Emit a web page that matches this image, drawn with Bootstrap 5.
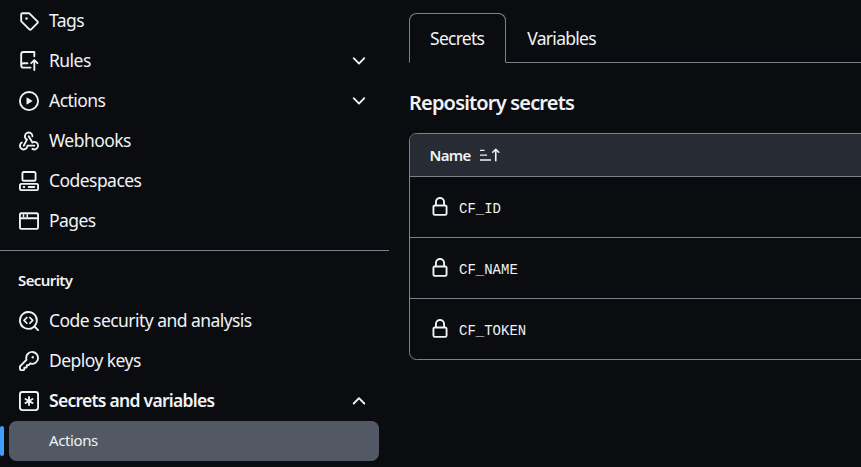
<!DOCTYPE html>
<html>
<head>
  <meta charset="utf-8">
  <meta name="viewport" content="width=device-width">
  <title>Secrets</title>
  <link href="https://cdn.jsdelivr.net/npm/bootstrap@5.3.3/dist/css/bootstrap.min.css" rel="stylesheet" type="text/css" />
  <style>
    html, body { height: 467px; overflow: hidden; }
    body { background: #0a0c10; color: #f0f3f6; font-family: "Noto Sans", "Open Sans", sans-serif; font-size: 17.5px; letter-spacing: -.55px; }
    svg { fill: currentColor; flex: none; }
    .page-wrap { width: 861px; overflow: hidden; }
    .side-pane { width: 389px; flex: none; padding-top: 1px; }
    .side-item { height: 40px; margin: 0 10px 0 9px; padding: 0 10px; gap: 10px; color: #f0f3f6; text-decoration: none; border-radius: 7.5px; position: relative; }
    .side-item > span { margin-top: -2px; }
    .side-item .chev { margin-left: auto; }
    .side-item.is-open { font-weight: 600; letter-spacing: -.73px; }
    .side-item.is-current { background: #525964; font-size: 15px; padding-left: 40px; letter-spacing: -.4px; }
    .side-item.is-current::before { content: ""; position: absolute; left: -9px; top: 5px; width: 4px; height: 30px; background: #409eff; border-radius: 5px; }
    .side-rule { margin: 9px 0 0; border-top: 1px solid #7a828e; opacity: 1; }
    .side-head { font-size: 15px; font-weight: 600; padding: 19px 0 0 18px; height: 50px; line-height: 20px; letter-spacing: -.6px; }
    .main-pane { width: 600px; flex: none; padding: 13px 0 0 20px; }
    .nav-tabs { border-bottom: 1px solid #7a828e; --bs-nav-tabs-border-color: #7a828e; height: 50px; }
    .nav-tabs .nav-link { color: #f0f3f6; height: 50px; padding: 0 21px 0 20px; display: flex; align-items: center; border-radius: 7.5px 7.5px 0 0; border-width: 1px; letter-spacing: -.72px; }
    .nav-tabs .nav-link.active { background: #0a0c10; color: #f0f3f6; border-color: #7a828e #7a828e #0a0c10; }
    .nav-tabs .nav-link:not(.active) { border-color: transparent; }
    .repo-title { font-size: 20px; font-weight: 600; margin: 26px 0 17px; line-height: 27px; letter-spacing: -.82px; }
    .secret-box { border: 1px solid #7a828e; border-radius: 7.5px; overflow: hidden; }
    .secret-head { height: 43px; background: #272b33; border-bottom: 1px solid #7a828e; padding: 0 20px 0 19.5px; gap: 9px; font-size: 15px; font-weight: 600; letter-spacing: -.7px; }
    .secret-row { height: 61px; padding: 0 20px; gap: 9px; border-bottom: 1px solid #7a828e; }
    .secret-row:last-child { border-bottom: 0; height: 60px; }
    .secret-name { font-family: "Liberation Mono", monospace; font-size: 14px; letter-spacing: 0; margin-top: 4px; }
  </style>
</head>
<body>
  <div class="page-wrap d-flex">
    <nav class="side-pane">
      <a class="side-item d-flex align-items-center" href="#">
        <svg width="20" height="20" viewBox="0 0 16 16"><path d="M1 7.775V2.75C1 1.784 1.784 1 2.75 1h5.025c.464 0 .91.184 1.238.513l6.25 6.25a1.75 1.75 0 0 1 0 2.474l-5.026 5.026a1.75 1.75 0 0 1-2.474 0l-6.25-6.25A1.752 1.752 0 0 1 1 7.775Zm1.5 0c0 .066.026.13.073.177l6.25 6.25a.25.25 0 0 0 .354 0l5.025-5.025a.25.25 0 0 0 0-.354l-6.25-6.25a.25.25 0 0 0-.177-.073H2.75a.25.25 0 0 0-.25.25ZM6 5a1 1 0 1 1 0 2 1 1 0 0 1 0-2Z"/></svg>
        <span>Tags</span>
      </a>
      <a class="side-item d-flex align-items-center" href="#">
        <svg width="20" height="20" viewBox="0 0 16 16"><path d="M1 2.5A2.5 2.5 0 0 1 3.5 0h8.75a.75.75 0 0 1 .75.75v3.5a.75.75 0 0 1-1.5 0V1.5h-8a1 1 0 0 0-1 1v6.708A2.493 2.493 0 0 1 3.5 9h3.25a.75.75 0 0 1 0 1.5H3.5a1 1 0 0 0 0 2h5.75a.75.75 0 0 1 0 1.5H3.5A2.5 2.5 0 0 1 1 11.5Zm13.23 7.79h-.001l-1.224-1.224v6.184a.75.75 0 0 1-1.5 0V9.066L10.28 10.29a.75.75 0 0 1-1.06-1.061l2.505-2.504a.75.75 0 0 1 1.06 0L15.29 9.23a.751.751 0 0 1-.018 1.042.751.751 0 0 1-1.042.018Z"/></svg>
        <span>Rules</span>
        <svg class="chev" width="20" height="20" viewBox="0 0 16 16"><path d="M12.78 5.22a.749.749 0 0 1 0 1.06l-4.25 4.25a.749.749 0 0 1-1.06 0L3.22 6.28a.749.749 0 1 1 1.06-1.06L8 8.939l3.72-3.719a.749.749 0 0 1 1.06 0Z"/></svg>
      </a>
      <a class="side-item d-flex align-items-center" href="#">
        <svg width="20" height="20" viewBox="0 0 16 16"><path d="M8 0a8 8 0 1 1 0 16A8 8 0 0 1 8 0ZM1.5 8a6.5 6.5 0 1 0 13 0 6.5 6.5 0 0 0-13 0Zm4.879-2.773 4.264 2.559a.25.25 0 0 1 0 .428l-4.264 2.559A.25.25 0 0 1 6 10.559V5.442a.25.25 0 0 1 .379-.215Z"/></svg>
        <span>Actions</span>
        <svg class="chev" width="20" height="20" viewBox="0 0 16 16"><path d="M12.78 5.22a.749.749 0 0 1 0 1.06l-4.25 4.25a.749.749 0 0 1-1.06 0L3.22 6.28a.749.749 0 1 1 1.06-1.06L8 8.939l3.72-3.719a.749.749 0 0 1 1.06 0Z"/></svg>
      </a>
      <a class="side-item d-flex align-items-center" href="#">
        <svg width="20" height="20" viewBox="0 0 16 16"><path d="M5.5 4.25a2.25 2.25 0 0 1 4.5 0 .75.75 0 0 0 1.5 0 3.75 3.75 0 1 0-6.14 2.889l-2.272 4.258a.75.75 0 0 0 1.324.706L7 7.25a.75.75 0 0 0-.309-1.015A2.25 2.25 0 0 1 5.5 4.25Z"/><path d="M7.364 3.607a.75.75 0 0 1 1.03.257l2.608 4.349a3.75 3.75 0 1 1-.628 6.785.75.75 0 0 1 .752-1.299 2.25 2.25 0 1 0-.033-3.88.75.75 0 0 1-1.03-.256L7.107 4.636a.75.75 0 0 1 .257-1.03Z"/><path d="M2.9 8.776A.75.75 0 0 1 2.625 9.8 2.25 2.25 0 1 0 6 11.75a.75.75 0 0 1 .75-.751h5.5a.75.75 0 0 1 0 1.5H7.425a3.751 3.751 0 1 1-5.55-3.998.75.75 0 0 1 1.024.274Z"/></svg>
        <span>Webhooks</span>
      </a>
      <a class="side-item d-flex align-items-center" href="#">
        <svg width="20" height="20" viewBox="0 0 16 16"><path d="M0 11.25c0-.966.784-1.75 1.75-1.75h12.5c.966 0 1.75.784 1.75 1.75v3A1.75 1.75 0 0 1 14.25 16H1.75A1.75 1.75 0 0 1 0 14.25Zm2-9.5C2 .784 2.784 0 3.75 0h8.5C13.216 0 14 .784 14 1.75v5a1.75 1.75 0 0 1-1.75 1.75h-8.5A1.75 1.75 0 0 1 2 6.75Zm1.75-.25a.25.25 0 0 0-.25.25v5c0 .138.112.25.25.25h8.5a.25.25 0 0 0 .25-.25v-5a.25.25 0 0 0-.25-.25Zm-2 9.5a.25.25 0 0 0-.25.25v3c0 .138.112.25.25.25h12.5a.25.25 0 0 0 .25-.25v-3a.25.25 0 0 0-.25-.25Z"/><path d="M7 12.75a.75.75 0 0 1 .75-.75h4.5a.75.75 0 0 1 0 1.5h-4.5a.75.75 0 0 1-.75-.75Zm-4 0a.75.75 0 0 1 .75-.75h.5a.75.75 0 0 1 0 1.5h-.5a.75.75 0 0 1-.75-.75Z"/></svg>
        <span>Codespaces</span>
      </a>
      <a class="side-item d-flex align-items-center" href="#">
        <svg width="20" height="20" viewBox="0 0 16 16"><path d="M0 2.75C0 1.784.784 1 1.75 1h12.5c.966 0 1.75.784 1.75 1.75v10.5A1.75 1.75 0 0 1 14.25 15H1.75A1.75 1.75 0 0 1 0 13.25ZM14.5 6.5h-13v6.75c0 .138.112.25.25.25h12.5a.25.25 0 0 0 .25-.25Zm0-3.75a.25.25 0 0 0-.25-.25H1.75a.25.25 0 0 0-.25.25V5h13Z"/><rect x="3" y="2.5" width="1.2" height="2.5"/><rect x="6" y="2.5" width="1.2" height="2.5"/></svg>
        <span>Pages</span>
      </a>

      <hr class="side-rule">
      <div class="side-head">Security</div>

      <a class="side-item d-flex align-items-center" href="#">
        <svg width="20" height="20" viewBox="0 0 16 16"><path d="M0 7.5a7.5 7.5 0 1 1 13.307 4.747l2.473 2.473a.75.75 0 1 1-1.06 1.06l-2.473-2.473A7.5 7.5 0 0 1 0 7.5Zm7.5-6a6 6 0 1 0 0 12 6 6 0 0 0 0-12Z"/><path d="M6.3 5.2 4 7.5l2.3 2.3M8.7 5.2 11 7.5 8.7 9.8" fill="none" stroke="currentColor" stroke-width="1.4" stroke-linecap="round" stroke-linejoin="round"/></svg>
        <span>Code security and analysis</span>
      </a>
      <a class="side-item d-flex align-items-center" href="#">
        <svg width="20" height="20" viewBox="0 0 16 16"><path d="M10.5 0a5.499 5.499 0 1 1-1.288 10.848l-.932.932a.749.749 0 0 1-.53.22H7v.75a.749.749 0 0 1-.22.53l-.5.5a.749.749 0 0 1-.53.22H5v.75a.749.749 0 0 1-.22.53l-.5.5a.749.749 0 0 1-.53.22h-2A1.75 1.75 0 0 1 0 14.25v-2c0-.199.079-.389.22-.53l4.932-4.932A5.5 5.5 0 0 1 10.5 0Zm-4 5.5c-.001.431.069.86.205 1.269a.75.75 0 0 1-.181.768L1.5 12.56v1.69c0 .138.112.25.25.25h1.69l.06-.06v-1.19a.75.75 0 0 1 .75-.75h1.19l.06-.06v-1.19a.75.75 0 0 1 .75-.75h1.19l1.023-1.025a.75.75 0 0 1 .768-.18A4 4 0 1 0 6.5 5.5ZM11 6a1 1 0 1 1 0-2 1 1 0 0 1 0 2Z"/></svg>
        <span>Deploy keys</span>
      </a>
      <a class="side-item is-open d-flex align-items-center" href="#">
        <svg width="20" height="20" viewBox="0 0 16 16"><path d="M0 2.75A2.75 2.75 0 0 1 2.75 0h10.5A2.75 2.75 0 0 1 16 2.75v10.5A2.75 2.75 0 0 1 13.25 16H2.75A2.75 2.75 0 0 1 0 13.25ZM2.75 1.5c-.69 0-1.25.56-1.25 1.25v10.5c0 .69.56 1.25 1.25 1.25h10.5c.69 0 1.25-.56 1.25-1.25V2.75c0-.69-.56-1.25-1.25-1.25Z"/><path d="M8 4a.75.75 0 0 1 .75.75V6.7l1.69-.975a.75.75 0 0 1 .75 1.3L9.5 8l1.69.975a.75.75 0 0 1-.75 1.3L8.75 9.3v1.95a.75.75 0 0 1-1.5 0V9.3l-1.69.975a.75.75 0 0 1-.75-1.3L6.5 8l-1.69-.975a.75.75 0 0 1 .75-1.3l1.69.975V4.75A.75.75 0 0 1 8 4Z"/></svg>
        <span>Secrets and variables</span>
        <svg class="chev" width="20" height="20" viewBox="0 0 16 16"><path d="M3.22 10.53a.749.749 0 0 1 0-1.06l4.25-4.25a.749.749 0 0 1 1.06 0l4.25 4.25a.749.749 0 1 1-1.06 1.06L8 6.811 4.28 10.53a.749.749 0 0 1-1.06 0Z"/></svg>
      </a>
      <a class="side-item is-current d-flex align-items-center" href="#"><span>Actions</span></a>
    </nav>

    <main class="main-pane">
      <ul class="nav nav-tabs">
        <li class="nav-item"><a class="nav-link active" href="#">Secrets</a></li>
        <li class="nav-item"><a class="nav-link" href="#">Variables</a></li>
      </ul>
      <h2 class="repo-title">Repository secrets</h2>
      <div class="secret-box">
        <div class="secret-head d-flex align-items-center">
          <span>Name</span>
          <svg width="20" height="20" viewBox="0 0 16 16"><path d="M0 3.7h3.6v1H0Zm0 3.8h5.6v1H0Zm0 3.9h8.8v1.1H0Z"/><path d="M12.6 12.6V3.4M10.2 5.8l2.4-2.4L15 5.8" fill="none" stroke="currentColor" stroke-width="1.3" stroke-linecap="round" stroke-linejoin="round"/></svg>
        </div>
        <div class="secret-row d-flex align-items-center">
          <svg width="20" height="20" viewBox="0 0 16 16"><path d="M4 4a4 4 0 0 1 8 0v2h.25c.966 0 1.75.784 1.75 1.75v5.5A1.75 1.75 0 0 1 12.25 15h-8.5A1.75 1.75 0 0 1 2 13.25v-5.5C2 6.784 2.784 6 3.75 6H4Zm8.25 3.5h-8.5a.25.25 0 0 0-.25.25v5.5c0 .138.112.25.25.25h8.5a.25.25 0 0 0 .25-.25v-5.5a.25.25 0 0 0-.25-.25ZM10.5 6V4a2.5 2.5 0 1 0-5 0v2Z"/></svg>
          <span class="secret-name">CF_ID</span>
        </div>
        <div class="secret-row d-flex align-items-center">
          <svg width="20" height="20" viewBox="0 0 16 16"><path d="M4 4a4 4 0 0 1 8 0v2h.25c.966 0 1.75.784 1.75 1.75v5.5A1.75 1.75 0 0 1 12.25 15h-8.5A1.75 1.75 0 0 1 2 13.25v-5.5C2 6.784 2.784 6 3.75 6H4Zm8.25 3.5h-8.5a.25.25 0 0 0-.25.25v5.5c0 .138.112.25.25.25h8.5a.25.25 0 0 0 .25-.25v-5.5a.25.25 0 0 0-.25-.25ZM10.5 6V4a2.5 2.5 0 1 0-5 0v2Z"/></svg>
          <span class="secret-name">CF_NAME</span>
        </div>
        <div class="secret-row d-flex align-items-center">
          <svg width="20" height="20" viewBox="0 0 16 16"><path d="M4 4a4 4 0 0 1 8 0v2h.25c.966 0 1.75.784 1.75 1.75v5.5A1.75 1.75 0 0 1 12.25 15h-8.5A1.75 1.75 0 0 1 2 13.25v-5.5C2 6.784 2.784 6 3.75 6H4Zm8.25 3.5h-8.5a.25.25 0 0 0-.25.25v5.5c0 .138.112.25.25.25h8.5a.25.25 0 0 0 .25-.25v-5.5a.25.25 0 0 0-.25-.25ZM10.5 6V4a2.5 2.5 0 1 0-5 0v2Z"/></svg>
          <span class="secret-name">CF_TOKEN</span>
        </div>
      </div>
    </main>
  </div>
  <script src="https://cdn.jsdelivr.net/npm/bootstrap@5.3.3/dist/js/bootstrap.bundle.min.js"></script>
</body>
</html>
